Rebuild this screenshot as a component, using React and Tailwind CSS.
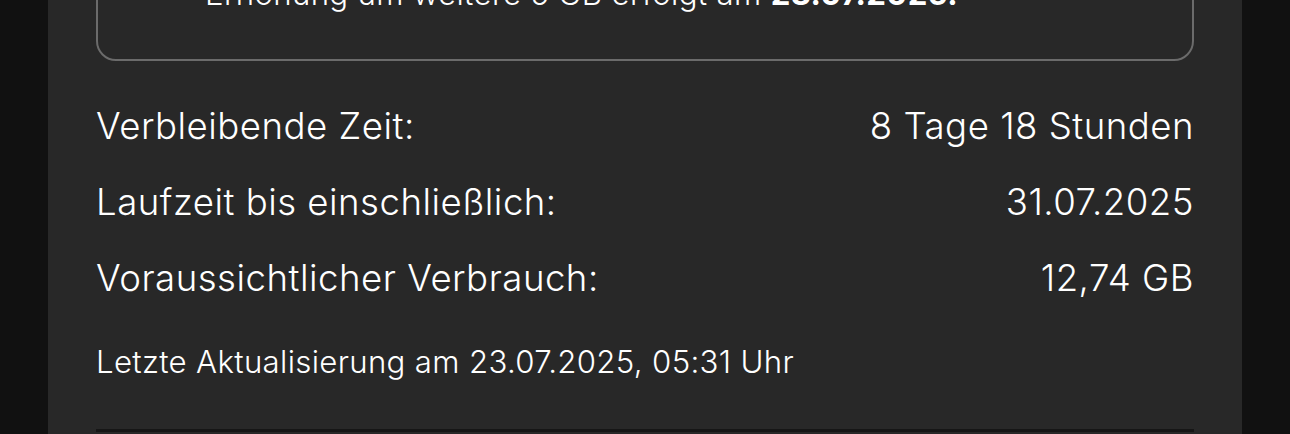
import React from 'react';

const rows = [
  { label: 'Verbleibende Zeit:', value: '8 Tage 18 Stunden' },
  { label: 'Laufzeit bis einschließlich:', value: '31.07.2025' },
  { label: 'Voraussichtlicher Verbrauch:', value: '12,74 GB' },
];

export default function App() {
  return (
    <div
      className="h-[434px] overflow-hidden bg-[#111111] px-12 text-white"
      style={{ fontFamily: 'Inter, "Noto Sans", sans-serif' }}
    >
      <div className="flex h-full flex-col bg-[#282828] px-12 font-[350]">
        {/* Top-up notice (scrolled partly out of view) */}
        <div className="-mt-[51px] rounded-[20px] border-2 border-[#6b6b6b] pb-[46px] pl-[107px] pt-6">
          <p className="text-[31.2px] leading-[38px] tracking-[0.33px]">
            Erhöhung um weitere 5 GB erfolgt am <span className="font-bold">23.07.2025.</span>
          </p>
        </div>

        <div className="mt-[43px] flex flex-col gap-8">
          {rows.map(r => (
            <div
              key={r.label}
              className="flex items-center justify-between text-[36.6px] leading-[44px] tracking-[0.5px]"
            >
              <span>{r.label}</span>
              <span>{r.value}</span>
            </div>
          ))}
        </div>

        <p className="mt-[43px] text-[31.2px] leading-[38px] tracking-[0.33px]">
          Letzte Aktualisierung am 23.07.2025, 05:31 Uhr
        </p>

        <div className="mt-[48px] h-[3px] shrink-0 bg-[#161616]" />
      </div>
    </div>
  );
}
